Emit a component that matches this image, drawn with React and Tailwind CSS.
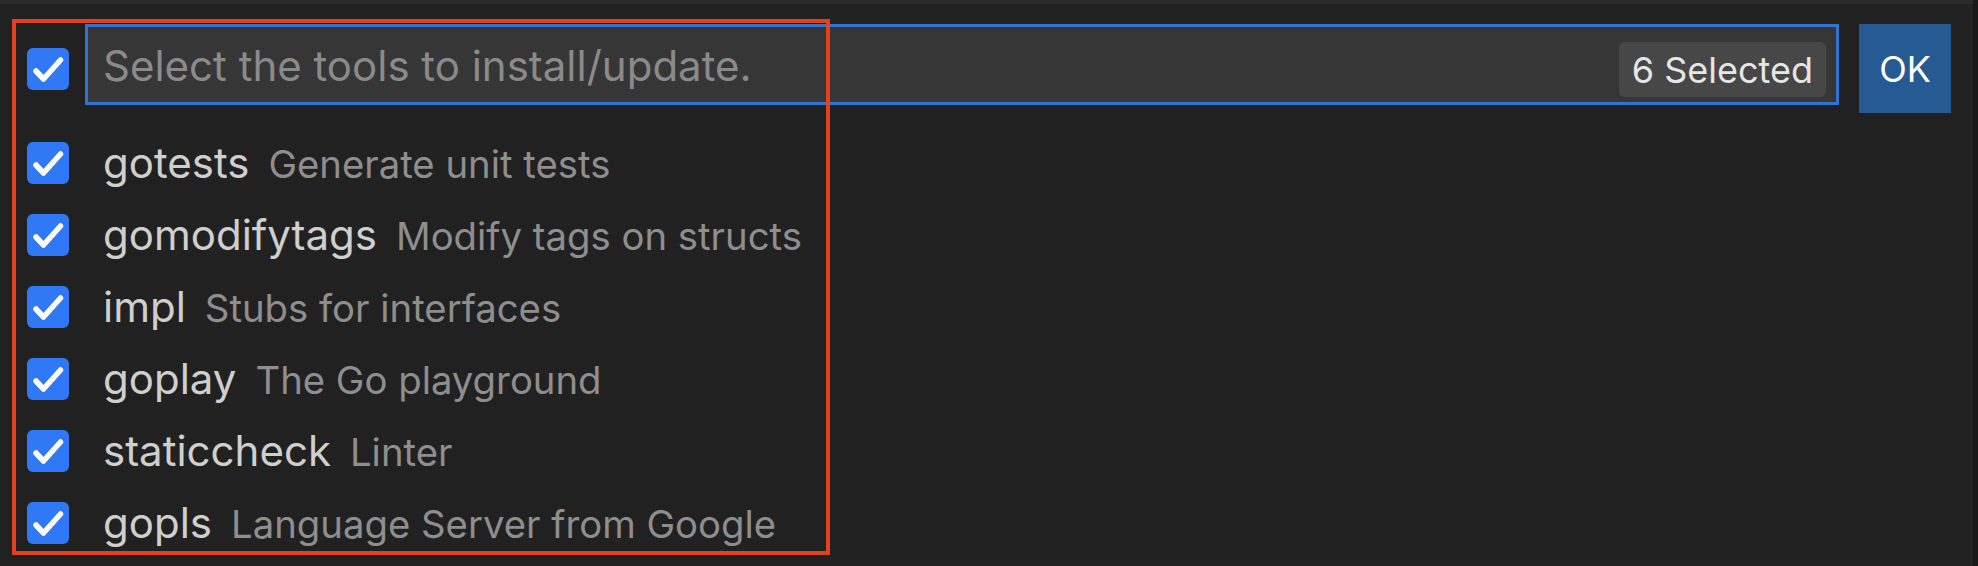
import React from "react"

const tools = [
    { name: "gotests", desc: "Generate unit tests" },
    { name: "gomodifytags", desc: "Modify tags on structs" },
    { name: "impl", desc: "Stubs for interfaces" },
    { name: "goplay", desc: "The Go playground" },
    { name: "staticcheck", desc: "Linter" },
    { name: "gopls", desc: "Language Server from Google" },
]

const Check = () => (
    <div className="w-[42px] h-[42px] shrink-0 rounded-[6px] bg-[#3178f6] flex items-center justify-center">
        <svg width="42" height="42" viewBox="0 0 42 42" fill="none">
            <path d="M9 23 L16.5 31 L33.5 12" stroke="#fff" strokeWidth="5.5" strokeLinecap="round" strokeLinejoin="round" />
        </svg>
    </div>
)

const Row = ({ name, desc }) => (
    <div className="h-[72px] flex items-center">
        <Check />
        <div className="ml-[34px] flex items-baseline whitespace-nowrap">
            <span className="text-[42px] text-[#cfcfcf] leading-none">{name}</span>
            <span className="ml-[19px] text-[38.3px] text-[#8e8e8e] leading-none">{desc}</span>
        </div>
    </div>
)

export default function App() {
    return (
        <div className="relative w-[1978px] h-[566px] bg-[#212121] overflow-hidden border-r-[5px] border-[#181818] font-['Inter',sans-serif]">
            <div className="h-[4px] bg-[#2a2a2a]" />
            <div className="flex items-start pt-[20px] pl-[27px]">
                <div className="mt-[24px]">
                    <Check />
                </div>
                <div className="ml-[16px] w-[1754px] h-[81px] border-[3px] border-[#2f74d4] bg-[#363636] flex items-center pl-[15px] pr-[10px]">
                    <span className="flex-1 mt-[2px] text-[42px] text-[#8a8a8a] leading-none">Select the tools to install/update.</span>
                    <span className="mt-[10px] h-[55px] px-[13px] rounded-[6px] bg-[#474747] text-[#e6e6e6] text-[36px] flex items-center">6 Selected</span>
                </div>
                <button className="ml-[20px] w-[92px] h-[89px] bg-[#255a92] text-white text-[36px] flex items-center justify-center">OK</button>
            </div>
            <div className="mt-[14px] pl-[27px] flex flex-col">
                {tools.map(t => <Row key={t.name} {...t} />)}
            </div>
            <div className="absolute left-[12px] top-[19px] w-[818px] h-[536px] border-[4px] border-[#e4401d]" />
        </div>
    )
}
